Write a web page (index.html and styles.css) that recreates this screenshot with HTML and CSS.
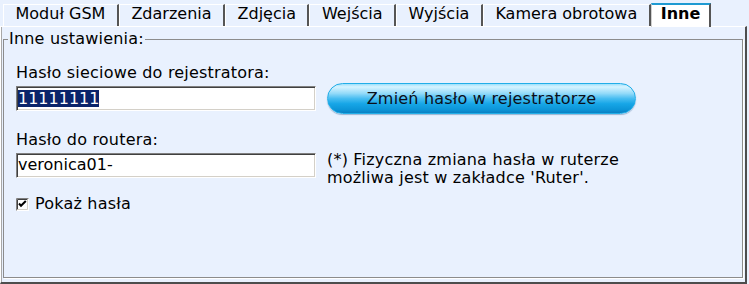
FILE: index.html
```html
<!DOCTYPE html>
<html lang="pl">
<head>
<meta charset="utf-8">
<title>Inne ustawienia</title>
<link rel="stylesheet" href="styles.css">
</head>
<body>
<div class="window">
  <div class="tabs">
    <div class="tab">Moduł GSM</div>
    <div class="tab">Zdarzenia</div>
    <div class="tab">Zdjęcia</div>
    <div class="tab">Wejścia</div>
    <div class="tab">Wyjścia</div>
    <div class="tab">Kamera obrotowa</div>
    <div class="tab active">Inne</div>
  </div>
  <div class="panel">
    <fieldset class="group">
      <legend class="group-title">Inne ustawienia:</legend>
      <div class="content">
        <div class="label">Hasło sieciowe do rejestratora:</div>
        <div class="row row-center">
          <div class="textbox"><span class="selected">11111111</span></div>
          <button class="btn" type="button">Zmień hasło w rejestratorze</button>
        </div>
        <div class="label label-second">Hasło do routera:</div>
        <div class="row row-top">
          <div class="textbox textbox-offset">veronica01-</div>
          <div class="note">(*) Fizyczna zmiana hasła w ruterze<br>możliwa jest w zakładce 'Ruter'.</div>
        </div>
        <label class="check">
          <span class="checkbox">
            <svg width="13" height="13" viewBox="0 0 13 13">
              <rect x="0" y="0" width="13" height="13" fill="#ffffff"/>
              <path d="M0.5 12.5V0.5H12.5" stroke="#808080" fill="none"/>
              <path d="M1.5 11.5V1.5H11.5" stroke="#404040" fill="none"/>
              <path d="M1.5 11.5H11.5V1.5" stroke="#d4d0c8" fill="none"/>
              <path d="M3 5.5L5 7.8L9.8 3" stroke="#000000" stroke-width="2" fill="none"/>
            </svg>
          </span>
          <span class="check-text">Pokaż hasła</span>
        </label>
      </div>
    </fieldset>
  </div>
</div>
</body>
</html>
```
FILE: styles.css
```css
* { box-sizing: border-box; }

body {
  margin: 0;
  background: #e9f1fe;
  font-family: "DejaVu Sans", Verdana, sans-serif;
  font-size: 16px;
  letter-spacing: 0.2px;
  color: #000;
}

.window {
  width: 749px;
  height: 284px;
  display: flex;
  flex-direction: column;
  padding-right: 2px;
  background: #e9f1fe;
}

.tabs {
  display: flex;
  align-items: flex-start;
  height: 26px;
  padding: 3px 0 0 3px;
  position: relative;
  z-index: 1;
  letter-spacing: 0;
}

.tab {
  height: 22px;
  margin-top: 1px;
  padding: 0 11.5px;
  line-height: 18px;
  white-space: nowrap;
  background: #e9f1fe;
  border-top: 1px solid #ffffff;
  border-left: 1px solid #ffffff;
  border-right: 2px solid #555555;
}

.tab.active {
  height: 24px;
  margin-top: 0;
  padding: 0 9px;
  background: #ffffff;
  border-top: 2px solid #1e9ad2;
  border-left: 1px solid #d0d0d0;
  font-weight: bold;
}

.panel {
  flex: 1;
  display: flex;
  padding: 3px 2px 4px 2px;
  border-top: 1px solid #ffffff;
  border-left: 1px solid #ffffff;
  border-right: 2px solid #4d4d4d;
  border-bottom: 2px solid #4d4d4d;
  box-shadow: inset 1px 0 #a8a8a8;
}

.group {
  flex: 1;
  margin: 0;
  padding: 0;
  min-width: 0;
  border: 1px solid #8c8c8c;
  box-shadow: 1px 1px 0 #ffffff;
}

.group-title {
  margin-left: 4px;
  padding: 0 1px;
  line-height: 18px;
  background: #e9f1fe;
}

.content {
  padding: 16px 0 0 12px;
}

.label {
  line-height: 18px;
}

.label-second {
  margin-top: 17px;
}

.row {
  display: flex;
  gap: 11px;
}

.row-center {
  align-items: center;
  margin-top: 1px;
}

.row-top {
  align-items: flex-start;
  margin-top: 2px;
}

.textbox {
  width: 300px;
  height: 25px;
  padding: 0 1px;
  line-height: 21px;
  background: #ffffff;
  border: 1px solid;
  border-color: #808080 #ffffff #ffffff #808080;
  box-shadow: inset 1px 1px #404040, inset -1px -1px #d4d0c8;
  white-space: nowrap;
  letter-spacing: 0;
}

.textbox-offset {
  margin-top: 2px;
}

.selected {
  display: inline-block;
  line-height: 17px;
  vertical-align: middle;
  background: #0a246a;
  color: #ffffff;
}

.btn {
  width: 309px;
  height: 31px;
  padding: 0;
  font: inherit;
  letter-spacing: 0.2px;
  color: #0a0f1a;
  border: 1px solid #22aee8;
  border-radius: 16px;
  background: linear-gradient(to bottom, #9fe0fb 0%, #d6f3ff 10%, #95dbf9 32%, #48bdf1 50%, #17a6e7 68%, #0c95d8 88%, #0a80c2 100%);
  box-shadow: 0 1px 1px rgba(0, 70, 130, 0.35);
}

.note {
  line-height: 18px;
  white-space: nowrap;
}

.check {
  display: flex;
  align-items: center;
  margin-top: 8px;
  line-height: 18px;
}

.checkbox {
  display: block;
  width: 13px;
  height: 13px;
}

.checkbox svg {
  display: block;
}

.check-text {
  margin-left: 6px;
}
```
